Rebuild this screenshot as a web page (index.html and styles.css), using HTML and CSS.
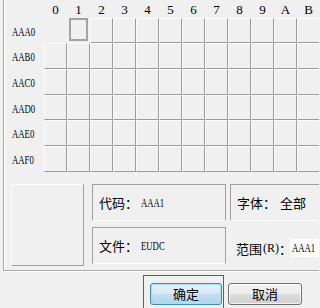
FILE: index.html
```html
<!DOCTYPE html>
<html lang="zh">
<head>
<meta charset="utf-8">
<title>EUDC</title>
<link rel="stylesheet" href="styles.css">
</head>
<body>
<div class="page">
  <div class="group">
    <div class="table">
      <div class="corner"></div>
      <div class="hd">0</div><div class="hd">1</div><div class="hd">2</div><div class="hd">3</div>
      <div class="hd">4</div><div class="hd">5</div><div class="hd">6</div><div class="hd">7</div>
      <div class="hd">8</div><div class="hd">9</div><div class="hd">A</div><div class="hd">B</div>

      <div class="rl"><span class="nar">AAA0</span></div>
      <div class="void"></div><div class="cell sel"></div><div class="cell"></div><div class="cell"></div>
      <div class="cell"></div><div class="cell"></div><div class="cell"></div><div class="cell"></div>
      <div class="cell"></div><div class="cell"></div><div class="cell"></div><div class="cell"></div>

      <div class="rl"><span class="nar">AAB0</span></div>
      <div class="cell"></div><div class="cell"></div><div class="cell"></div><div class="cell"></div>
      <div class="cell"></div><div class="cell"></div><div class="cell"></div><div class="cell"></div>
      <div class="cell"></div><div class="cell"></div><div class="cell"></div><div class="cell"></div>

      <div class="rl"><span class="nar">AAC0</span></div>
      <div class="cell"></div><div class="cell"></div><div class="cell"></div><div class="cell"></div>
      <div class="cell"></div><div class="cell"></div><div class="cell"></div><div class="cell"></div>
      <div class="cell"></div><div class="cell"></div><div class="cell"></div><div class="cell"></div>

      <div class="rl"><span class="nar">AAD0</span></div>
      <div class="cell"></div><div class="cell"></div><div class="cell"></div><div class="cell"></div>
      <div class="cell"></div><div class="cell"></div><div class="cell"></div><div class="cell"></div>
      <div class="cell"></div><div class="cell"></div><div class="cell"></div><div class="cell"></div>

      <div class="rl"><span class="nar">AAE0</span></div>
      <div class="cell"></div><div class="cell"></div><div class="cell"></div><div class="cell"></div>
      <div class="cell"></div><div class="cell"></div><div class="cell"></div><div class="cell"></div>
      <div class="cell"></div><div class="cell"></div><div class="cell"></div><div class="cell"></div>

      <div class="rl"><span class="nar">AAF0</span></div>
      <div class="cell"></div><div class="cell"></div><div class="cell"></div><div class="cell"></div>
      <div class="cell"></div><div class="cell"></div><div class="cell"></div><div class="cell"></div>
      <div class="cell"></div><div class="cell"></div><div class="cell"></div><div class="cell"></div>
    </div>

    <div class="panel">
      <div class="preview"></div>
      <div class="mid">
        <div class="box"><span class="lbl">代码：</span><span class="val nar">AAA1</span></div>
        <div class="box"><span class="lbl">文件：</span><span class="val nar">EUDC</span></div>
      </div>
      <div class="right">
        <div class="box"><span class="lbl wide">字体：</span><span class="cn">全部</span></div>
        <div class="range"><span class="cn">范围</span><span class="latin">(R)</span><span class="colon">：</span><span class="input"><span class="nar">AAA1</span></span></div>
      </div>
    </div>
  </div>

  <div class="buttons">
    <button class="btn default">确定</button>
    <button class="btn cancel">取消</button>
  </div>

  <div class="mark"></div>
</div>
</body>
</html>
```

FILE: styles.css
```css
html, body {
  margin: 0;
  padding: 0;
  background: #f0f0f0;
}
body {
  font-family: "Liberation Serif", "Noto Sans CJK SC", serif;
  font-size: 13px;
  color: #000;
}
.page {
  position: relative;
  width: 319px;
  height: 308px;
  overflow: hidden;
}
.group {
  margin-left: 3px;
  width: 400px;
  height: 270px;
  border-left: 1px solid #a9a9a9;
  border-bottom: 1px solid #a9a9a9;
  box-shadow: inset 1px 0 0 #fff, 0 1px 0 #fff;
}
.table {
  display: grid;
  grid-template-columns: 40px repeat(12, 23px);
  grid-template-rows: 18px 25px 26px 26px 25px 26px 26px;
}
.hd {
  display: flex;
  align-items: center;
  justify-content: center;
  font-size: 13px;
  padding-top: 1px;
}
.nar {
  display: inline-block;
  transform: scaleX(0.67);
  transform-origin: left center;
  white-space: nowrap;
}
.rl {
  display: flex;
  align-items: center;
  padding-left: 8px;
  font-size: 13px;
  padding-top: 2px;
}
.cell {
  box-sizing: border-box;
  border-style: solid;
  border-width: 1px;
  border-color: #fbfbfb #9c9c9c #9c9c9c #fbfbfb;
  background: #f0f0f0;
}
.cell.sel {
  margin: 0 2px 2px 2px;
  border: 2px solid #a3a3a3;
}
.panel {
  display: flex;
  align-items: flex-start;
  margin-top: 12px;
  padding-left: 7px;
}
.preview {
  box-sizing: border-box;
  width: 73px;
  height: 82px;
  border-style: solid;
  border-width: 1px;
  border-color: #fff #a0a0a0 #a0a0a0 #fff;
}
.mid {
  margin-left: 8px;
  width: 134px;
  display: flex;
  flex-direction: column;
  gap: 6px;
}
.right {
  margin-left: 4px;
  width: 140px;
  display: flex;
  flex-direction: column;
  gap: 6px;
}
.box {
  box-sizing: border-box;
  height: 37px;
  border: 1px solid #a0a0a0;
  border-bottom-color: #fff;
  display: flex;
  align-items: center;
  padding-left: 6px;
}
.lbl {
  width: 42px;
  font-family: "Noto Sans CJK SC", sans-serif;
  font-size: 13px;
}
.lbl.wide {
  width: 43px;
}
.val {
  font-size: 13px;
}
.cn {
  font-family: "Noto Sans CJK SC", sans-serif;
  font-size: 13px;
}
.range {
  box-sizing: border-box;
  height: 37px;
  display: flex;
  align-items: center;
  padding-left: 6px;
  padding-top: 5px;
}
.latin {
  font-size: 12px;
  margin-left: 1px;
}
.colon {
  font-family: "Noto Sans CJK SC", sans-serif;
  font-size: 13px;
  width: 11px;
}
.input {
  box-sizing: border-box;
  height: 18px;
  width: 40px;
  background: #fff;
  display: flex;
  align-items: center;
  padding-left: 2px;
  font-size: 13px;
}
.buttons {
  display: flex;
  gap: 6px;
  margin-top: 12px;
  padding-left: 150px;
}
.btn {
  box-sizing: border-box;
  height: 22px;
  width: 74px;
  padding: 0;
  border: 1px solid #707070;
  border-radius: 3px;
  background: linear-gradient(#f2f2f2 0%, #ebebeb 50%, #dddddd 50%, #cfcfcf 100%);
  box-shadow: inset 0 0 0 1px rgba(255, 255, 255, 0.75);
  font-family: "Noto Sans CJK SC", sans-serif;
  font-size: 13px;
  line-height: 20px;
  color: #000;
}
.btn.default {
  width: 72px;
  border-color: #3d8db5;
  background: linear-gradient(#e4f1f9 0%, #d6eaf6 50%, #c4e0f0 50%, #b2d6ea 100%);
  box-shadow: inset 0 0 0 1px #a9def4;
}
.mark {
  position: absolute;
  left: 143px;
  top: 275px;
  width: 81px;
  height: 40px;
  box-sizing: border-box;
  border: 1px solid #d92b2b;
}
```
